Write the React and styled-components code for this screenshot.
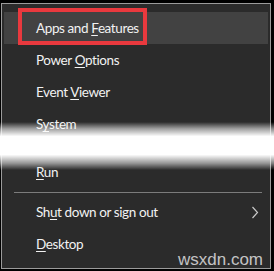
import styled, { createGlobalStyle } from 'styled-components';

const GlobalStyle = createGlobalStyle`
  html, body {
    margin: 0;
    padding: 0;
    background: #000;
  }
  body {
    font-family: 'Lato', 'Liberation Sans', sans-serif;
  }
`;

const Screen = styled.div`
  position: relative;
  width: 274px;
  height: 271px;
  padding: 3px 4px 0 1px;
  box-sizing: border-box;
  overflow: hidden;
`;

const Menu = styled.ul`
  list-style: none;
  margin: 0;
  width: 270px;
  height: 266px;
  box-sizing: border-box;
  padding: 8px 2px 0;
  background: #2b2b2b;
  border: 1px solid #9b9b9b;
  display: flex;
  flex-direction: column;
`;

const Item = styled.li`
  position: relative;
  display: flex;
  align-items: center;
  justify-content: space-between;
  height: 32px;
  flex-shrink: 0;
  padding: 0 9px 0 32px;
  color: #f2f2f2;
  font-size: 13.5px;
  letter-spacing: -0.4px;
  background: ${(p) => (p.$active ? '#424242' : 'transparent')};
`;

const Key = styled.span`
  text-decoration: underline;
  text-underline-offset: 2px;
`;

const Callout = styled.div`
  position: absolute;
  left: 14px;
  top: -4px;
  width: 129px;
  height: 37px;
  box-sizing: border-box;
  border: 4px solid #e9393e;
`;

const Tear = styled.div`
  position: relative;
  height: 16px;
  flex-shrink: 0;

  &::before {
    content: '';
    position: absolute;
    left: -6px;
    right: -8px;
    top: -18px;
    bottom: -14px;
    background: linear-gradient(
      to bottom,
      rgba(255, 255, 255, 0) 0%,
      rgba(255, 255, 255, 0.55) 14%,
      #fff 30%,
      #fff 68%,
      rgba(255, 255, 255, 0.5) 86%,
      rgba(255, 255, 255, 0) 100%
    );
  }
`;

const Separator = styled.hr`
  margin: 4px 6px 3px 10px;
  border: 0;
  height: 1px;
  background: #7c7c7c;
  flex-shrink: 0;
`;

const Chevron = styled.svg`
  width: 8px;
  height: 13px;
`;

const Watermark = styled.span`
  position: absolute;
  right: 11px;
  bottom: 1px;
  font-family: 'Liberation Sans', sans-serif;
  font-size: 17px;
  color: rgba(225, 225, 225, 0.85);
`;

export default function App() {
  return (
    <Screen>
      <GlobalStyle />
      <Menu>
        <Item $active>
          <span>
            Apps and <Key>F</Key>eatures
          </span>
          <Callout />
        </Item>
        <Item>
          <span>
            Power <Key>O</Key>ptions
          </span>
        </Item>
        <Item>
          <span>
            Event <Key>V</Key>iewer
          </span>
        </Item>
        <Item>
          <span>
            S<Key>y</Key>stem
          </span>
        </Item>
        <Tear />
        <Item>
          <span>
            <Key>R</Key>un
          </span>
        </Item>
        <Separator />
        <Item>
          <span>
            Sh<Key>u</Key>t down or sign out
          </span>
          <Chevron viewBox="0 0 8 13">
            <path d="M1.5 1 L6.5 6.5 L1.5 12" fill="none" stroke="#c8c8c8" strokeWidth="1.2" />
          </Chevron>
        </Item>
        <Item>
          <span>
            <Key>D</Key>esktop
          </span>
        </Item>
      </Menu>
      <Watermark>wsxdn.com</Watermark>
    </Screen>
  );
}
